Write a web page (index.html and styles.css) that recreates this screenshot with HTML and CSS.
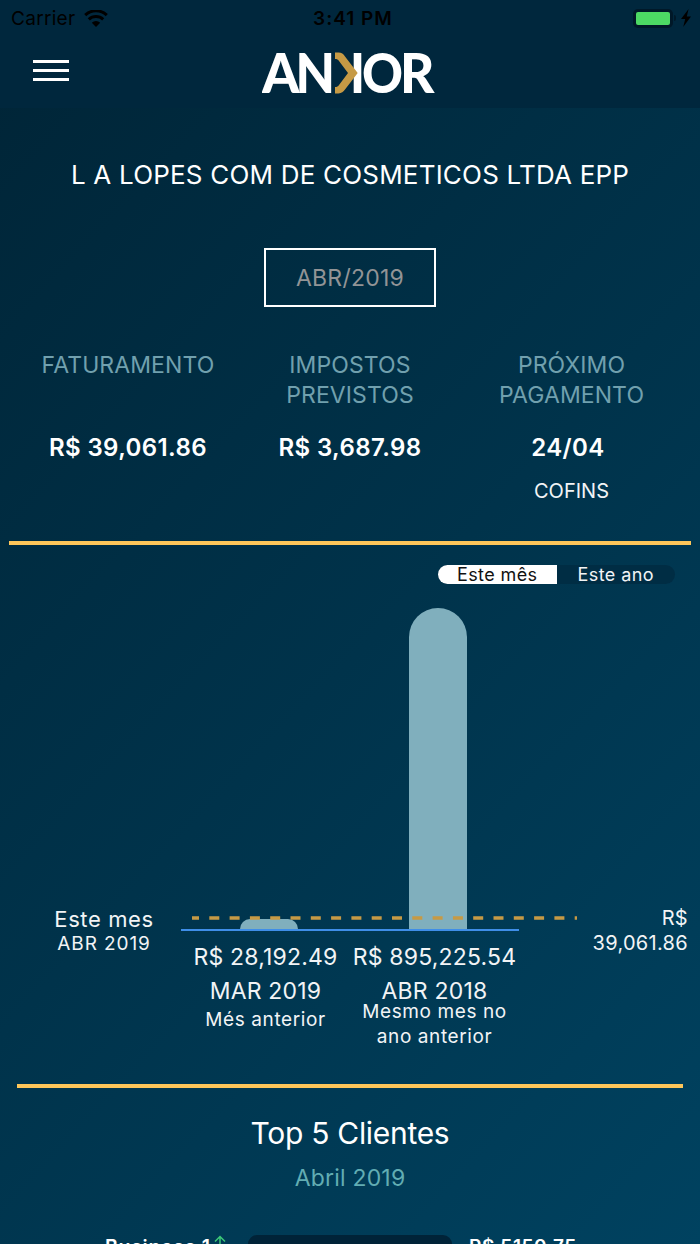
FILE: index.html
```html
<!DOCTYPE html>
<html lang="pt-BR">
<head>
    <meta charset="UTF-8">
    <meta name="viewport" content="width=device-width, initial-scale=1.0">
    <title>Ankor</title>
    <link rel="stylesheet" href="styles.css">
</head>
<body>
    <header class="topbar">
        <div class="status">
            <div class="status_left">
                <span class="carrier">Carrier</span>
                <svg class="wifi" width="24" height="17" viewBox="0 0 24 17">
                    <path d="M1.2 5.2a15.5 15.5 0 0 1 21.6 0M4.8 9.4a10.4 10.4 0 0 1 14.4 0" fill="none" stroke="#000" stroke-width="3"/>
                    <path d="M7.8 12.7a6 6 0 0 1 8.4 0L12 17z"/>
                </svg>
            </div>
            <span class="clock">3:41 PM</span>
            <div class="status_right">
                <div class="battery"><div class="battery_level"></div></div>
                <div class="battery_tip"></div>
                <svg class="bolt" width="12" height="18" viewBox="0 0 12 18">
                    <path d="M8.6 0L1 10h4.2L3.2 18 11 7.6H6.8z"/>
                </svg>
            </div>
        </div>
        <div class="nav">
            <div class="menu">
                <span></span>
                <span></span>
                <span></span>
            </div>
            <svg class="logo" width="176" height="60" viewBox="0 0 176 60">
                <g class="logo_text">
                    <text x="0" y="45" textLength="37.5" lengthAdjust="spacingAndGlyphs">A</text>
                    <text x="33.5" y="45" textLength="39.5" lengthAdjust="spacingAndGlyphs">N</text>
                    <text x="100" y="45" textLength="41" lengthAdjust="spacingAndGlyphs">O</text>
                    <text x="138" y="45" textLength="34.5" lengthAdjust="spacingAndGlyphs">R</text>
                </g>
                <path d="M91.700 5h7.600v40h-7.600z" fill="#fff"/>
                <path d="M73 4.600h3.500c3 0 5 1.400 6.500 3.800l12.700 16.600-12.700 16.600c-1.500 2.400-3.500 3.800-6.500 3.800H73v-6.500c2 0 3-.5 4-2L86 25l-9-11.900c-1-1.500-2-2-4-2z" fill="#c69a45"/>
            </svg>
        </div>
    </header>

    <main>
        <h1 class="company">L A LOPES COM DE COSMETICOS LTDA EPP</h1>
        <div class="month">ABR/2019</div>

        <section class="summary">
            <div class="summary_item">
                <h2>FATURAMENTO</h2>
                <strong>R$ 39,061.86</strong>
            </div>
            <div class="summary_item">
                <h2>IMPOSTOS<br>PREVISTOS</h2>
                <strong>R$ 3,687.98</strong>
            </div>
            <div class="summary_item">
                <h2>PRÓXIMO<br>PAGAMENTO</h2>
                <strong class="due">24/04</strong>
                <p>COFINS</p>
            </div>
        </section>

        <section class="compare">
            <div class="tabs">
                <div class="tab active">Este mês</div>
                <div class="tab">Este ano</div>
            </div>
            <div class="chart">
                <div class="current">
                    <p class="current_title">Este mes</p>
                    <p class="current_month">ABR 2019</p>
                </div>
                <div class="plot">
                    <div class="bars">
                        <div class="bar" style="height: 10px"></div>
                        <div class="bar" style="height: 321px"></div>
                        <svg class="limit" width="385" height="4">
                            <line x1="0" y1="2" x2="385" y2="2" stroke="#c69a45" stroke-width="3.6" stroke-dasharray="10 10.3" stroke-dashoffset="3"/>
                        </svg>
                    </div>
                    <div class="labels">
                        <div class="label">
                            <p class="amount">R$ 28,192.49</p>
                            <p class="period">MAR 2019</p>
                            <p class="note note_low">Més anterior</p>
                        </div>
                        <div class="label">
                            <p class="amount">R$ 895,225.54</p>
                            <p class="period">ABR 2018</p>
                            <p class="note">Mesmo mes no<br>ano anterior</p>
                        </div>
                    </div>
                </div>
                <div class="total">R$<br>39,061.86</div>
            </div>
        </section>

        <section class="clients">
            <h3>Top 5 Clientes</h3>
            <p class="clients_month">Abril 2019</p>
            <div class="client">
                <div class="client_name">
                    <span>Business 1</span>
                    <svg width="12" height="18" viewBox="0 0 12 18">
                        <path d="M6 18V1.500M1 6.500l5-5 5 5" fill="none" stroke="#3cc878" stroke-width="1.500"/>
                    </svg>
                </div>
                <div class="client_bar"></div>
                <span class="client_value">R$ 5150.75</span>
            </div>
        </section>
    </main>
</body>
</html>
```

FILE: styles.css
```css
* {
    margin: 0;
    padding: 0;
    box-sizing: border-box;
}

body {
    width: 700px;
    height: 1244px;
    overflow: hidden;
    font-family: Inter, "Liberation Sans", sans-serif;
    color: #f2f4f6;
    background: linear-gradient(133deg, #002436 0%, #00334b 52%, #004260 100%);
}

.topbar {
    height: 108px;
    background-color: #00273d;
}

/* Status bar */
.status {
    display: grid;
    grid-template-columns: 1fr auto 1fr;
    align-items: center;
    height: 36px;
    padding: 0 8px 0 11px;
    color: #000;
    font-size: 19px;
}

.status_left,
.status_right {
    display: flex;
    align-items: center;
}

.carrier {
    letter-spacing: 0.3px;
}

.wifi {
    margin-left: 9px;
}

.clock {
    margin-left: 3px;
    font-weight: 600;
    font-size: 19px;
    letter-spacing: 1px;
}

.status_right {
    justify-content: flex-end;
}

.battery {
    width: 40px;
    height: 19px;
    padding: 3px;
    border-radius: 5px;
    background-color: #001828;
}

.battery_level {
    height: 13px;
    border-radius: 2px;
    background-color: #4cd964;
}

.battery_tip {
    width: 2px;
    height: 6px;
    margin: 0 4px 0 1px;
    border-radius: 0 2px 2px 0;
    background-color: #001828;
}

/* Menu and logo */
.nav {
    display: grid;
    grid-template-columns: 1fr auto 1fr;
    padding: 12px 33px 0;
}

.menu {
    display: flex;
    flex-direction: column;
    gap: 6px;
    padding-top: 12px;
}

.menu span {
    width: 36px;
    height: 3px;
    background-color: #fff;
}

.logo_text {
    font-family: Lato, sans-serif;
    font-weight: 900;
    font-size: 56px;
    fill: #fff;
}

/* Company */
.company {
    padding-top: 50px;
    text-align: center;
    font-size: 26px;
    font-weight: 400;
    line-height: 34px;
    letter-spacing: 0.2px;
    color: #fff;
}

.month {
    width: 172px;
    height: 59px;
    margin: 56px auto 0;
    border: 2px solid #fff;
    text-align: center;
    font-size: 23px;
    line-height: 56px;
    letter-spacing: 0.25px;
    color: #929496;
}

.summary {
    display: grid;
    grid-template-columns: 238px 206px 237px;
    height: 238px;
    margin: 0 9px;
    padding-top: 43px;
    border-bottom: 4px solid #fec65a;
    text-align: center;
}

.summary h2 {
    height: 60px;
    font-size: 23px;
    font-weight: 400;
    line-height: 30.4px;
    letter-spacing: 0.1px;
    color: #71a0ae;
}

.summary strong {
    display: block;
    padding-top: 23px;
    font-size: 24px;
    font-weight: 600;
    line-height: 30px;
    letter-spacing: 0.4px;
    color: #fff;
}

.summary .due {
    margin-right: 7px;
}

.summary p {
    padding-top: 16px;
    font-size: 20px;
    line-height: 24px;
}

/* Comparison chart */
.compare {
    height: 543px;
    margin: 0 17px;
    padding-top: 20px;
    border-bottom: 4px solid #fec65a;
}

.tabs {
    display: flex;
    width: 237px;
    height: 19px;
    margin-left: auto;
    margin-right: 8px;
    border-radius: 10px;
    overflow: hidden;
    background-color: #002d44;
}

.tab {
    width: 50%;
    text-align: center;
    font-size: 18px;
    line-height: 19px;
    letter-spacing: 0.4px;
}

.tab.active {
    background-color: #fff;
    color: #111;
}

.chart {
    display: grid;
    grid-template-columns: 181px 338px 181px;
    margin: 24px -17px 0;
}

.current {
    padding: 298px 0 0 27px;
    text-align: center;
}

.current_title {
    font-size: 22px;
    line-height: 26px;
    letter-spacing: 0.6px;
}

.current_month {
    padding-top: 1px;
    font-size: 19px;
    line-height: 22px;
    letter-spacing: 0.9px;
}

.bars {
    position: relative;
    display: flex;
    align-items: flex-end;
    gap: 111px;
    height: 323px;
    padding-left: 59px;
    border-bottom: 2px solid #3f8ee8;
}

.bar {
    width: 58px;
    border-radius: 29px 29px 0 0;
    background-color: #80afbd;
}

.limit {
    position: absolute;
    left: 11px;
    bottom: 9.5px;
}

.labels {
    display: grid;
    grid-template-columns: 1fr 1fr;
    padding-top: 9px;
    text-align: center;
    white-space: nowrap;
}

.amount,
.period {
    font-size: 23px;
    line-height: 34px;
    letter-spacing: 0.2px;
}

.note {
    margin-top: -9px;
    font-size: 19px;
    line-height: 25px;
    letter-spacing: 0.6px;
}

.note_low {
    margin-top: -1px;
}

.total {
    padding: 298px 12px 0 0;
    text-align: right;
    font-size: 20px;
    line-height: 25px;
    letter-spacing: 0.3px;
}

/* Clients */
.clients {
    padding-top: 25px;
    text-align: center;
}

.clients h3 {
    font-size: 30px;
    font-weight: 400;
    line-height: 40px;
    letter-spacing: -0.3px;
    color: #fff;
}

.clients_month {
    padding-top: 10px;
    font-size: 23px;
    line-height: 30px;
    letter-spacing: 0.2px;
    color: #62adb3;
}

.client {
    display: grid;
    grid-template-columns: 126px 204px 1fr;
    column-gap: 17px;
    padding: 42px 0 0 105px;
    font-size: 19px;
    font-weight: 600;
    line-height: 24px;
    letter-spacing: 0.6px;
    text-align: left;
    white-space: nowrap;
    color: #fff;
}

.client_name {
    display: flex;
    gap: 3px;
}

.client_name span {
    letter-spacing: 0.7px;
    font-size: 19.5px;
}

.client_bar {
    height: 30px;
    border-radius: 9px;
    background-color: #002338;
}
```
